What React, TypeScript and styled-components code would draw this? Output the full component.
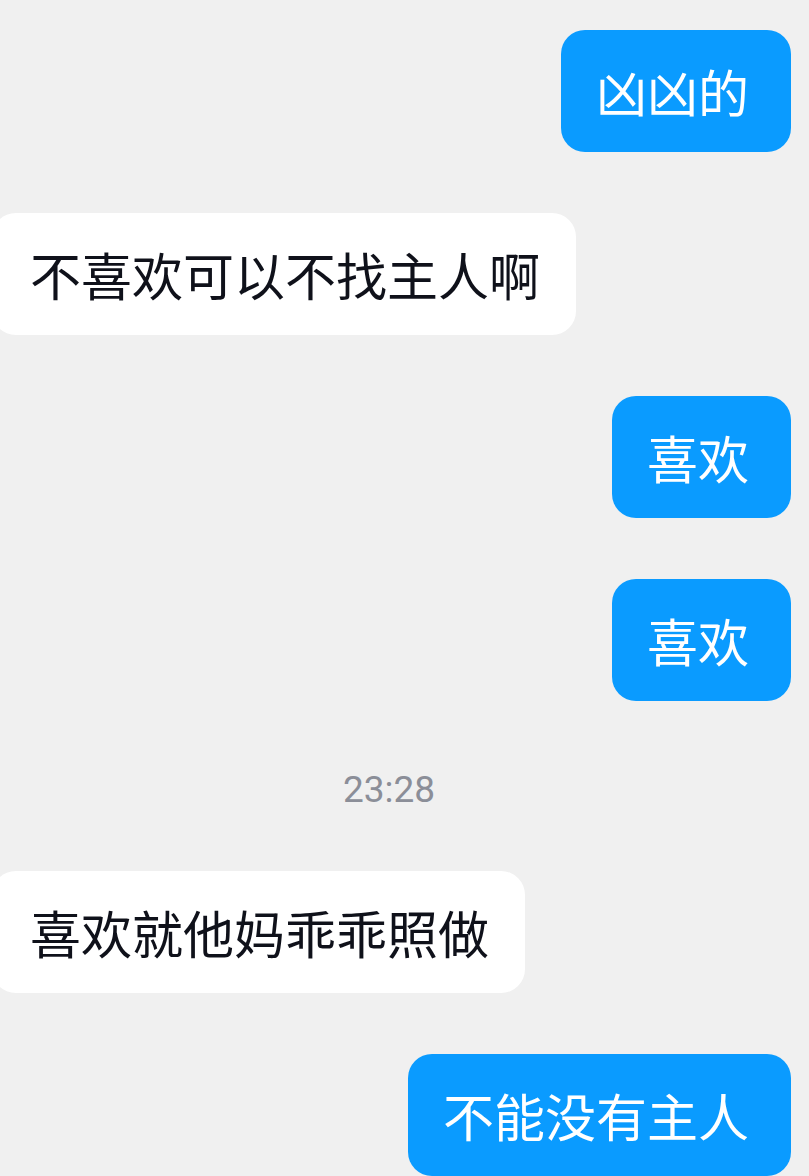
import React from 'react'
import styled, { createGlobalStyle } from 'styled-components'

const GlobalStyle = createGlobalStyle`
  html, body {
    margin: 0;
    padding: 0;
    background: #f0f0f0;
    overflow: hidden;
  }
  body {
    font-family: "Noto Sans CJK SC", "Noto Sans", sans-serif;
  }
`

const Chat = styled.div`
  display: flex;
  flex-direction: column;
  gap: 61px;
  padding: 30px 18px 0 0;
  width: 809px;
  height: 1176px;
  box-sizing: border-box;
  overflow: hidden;
`

const Row = styled.div<{ $mine?: boolean }>`
  display: flex;
  justify-content: ${(p) => (p.$mine ? 'flex-end' : 'flex-start')};
`

const Bubble = styled.div<{ $mine?: boolean }>`
  box-sizing: border-box;
  height: 122px;
  display: flex;
  align-items: center;
  padding: ${(p) => (p.$mine ? '0 42px 0 35px' : '0 36px 0 38px')};
  margin-left: ${(p) => (p.$mine ? '0' : '-8px')};
  border-radius: 24px;
  background: ${(p) => (p.$mine ? '#0a9bff' : '#ffffff')};
  color: ${(p) => (p.$mine ? '#ffffff' : '#0f111a')};
  font-size: 51px;
  line-height: 62px;
  white-space: nowrap;
`

const TimeRow = styled.div`
  height: 48px;
  display: flex;
  align-items: center;
  justify-content: center;
  padding: 6px 13px 0 0;
  box-sizing: border-box;
  font-family: Roboto, "Noto Sans", sans-serif;
  font-size: 37px;
  color: #8b8e98;
`

type Msg = { mine?: boolean; text?: string; time?: string }

const messages: Msg[] = [
  { mine: true, text: '凶凶的' },
  { text: '不喜欢可以不找主人啊' },
  { mine: true, text: '喜欢' },
  { mine: true, text: '喜欢' },
  { time: '23:28' },
  { text: '喜欢就他妈乖乖照做' },
  { mine: true, text: '不能没有主人' },
]

const App = () => {
  return (
    <>
      <GlobalStyle />
      <Chat>
        {messages.map((m, i) =>
          m.time ? (
            <TimeRow key={i}>{m.time}</TimeRow>
          ) : (
            <Row key={i} $mine={m.mine}>
              <Bubble $mine={m.mine}>{m.text}</Bubble>
            </Row>
          )
        )}
      </Chat>
    </>
  )
}

export default App
